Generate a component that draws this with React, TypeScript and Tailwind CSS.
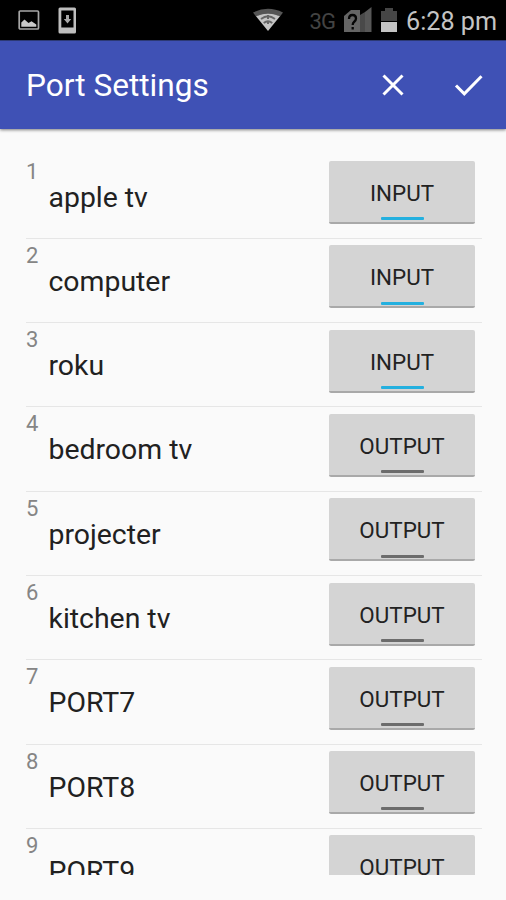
type Port = { id: number; name: string; mode: 'INPUT' | 'OUTPUT' };

const ports: Port[] = [
  { id: 1, name: 'apple tv', mode: 'INPUT' },
  { id: 2, name: 'computer', mode: 'INPUT' },
  { id: 3, name: 'roku', mode: 'INPUT' },
  { id: 4, name: 'bedroom tv', mode: 'OUTPUT' },
  { id: 5, name: 'projecter', mode: 'OUTPUT' },
  { id: 6, name: 'kitchen tv', mode: 'OUTPUT' },
  { id: 7, name: 'PORT7', mode: 'OUTPUT' },
  { id: 8, name: 'PORT8', mode: 'OUTPUT' },
  { id: 9, name: 'PORT9', mode: 'OUTPUT' },
];

function StatusBar() {
  return (
    <div className="flex h-[40px] shrink-0 items-center bg-black text-[#c4c4c4]">
      <svg className="ml-[18px]" width="22" height="22" viewBox="0 0 22 22">
        <rect x="1.2" y="2" width="19.3" height="18" rx="1" fill="none" stroke="#a6a6a6" strokeWidth="1.7" />
        <path d="M3.3 17.8v-4.2l3.2-3.1 4 3.5 3-1.8 4.8 3.4v2.2z" fill="#c9c9c9" />
      </svg>
      <svg className="ml-[18px]" width="19" height="28" viewBox="0 0 19 28">
        <path fillRule="evenodd" d="M2 1.500h14.5q1.5 0 1.5 1.5v23q0 1.500-1.500 1.500h-14.500q-1.500 0-1.500-1.500v-23q0-1.500 1.500-1.500zM3.300 4.500v17h12.200v-17z" fill="#bebebe" />
        <path d="M8 9h3v4h2.200l-3.700 4.500-3.700-4.500h2.200z" fill="#a8a8a8" />
      </svg>
      <svg className="ml-[175px]" width="32" height="24" viewBox="0 0 32 24">
        <path d="M1 4.500Q16-3 31 4.500L28 8.500Q16 2.500 4 8.500z" fill="#555" />
        <path d="M4 8.300Q16 2.800 28 8.300L16 23z" fill="#c4c4c4" />
        <path d="M9 11Q16 5.500 23 11M11.700 15Q16 11.500 20.300 15" fill="none" stroke="#666" strokeWidth="1.800" />
        <path d="M16 7v4M16 13v3" stroke="#666" strokeWidth="2" />
      </svg>
      <span className="ml-[25.5px] w-[27.5px] pt-[3px] text-[22px] leading-[26px] tracking-[-0.8px] text-[#434343]">3G</span>
      <svg className="ml-[7px]" width="28" height="28" viewBox="0 0 28 28">
        <path d="M0 10L7 4h9v22H0z" fill="#656565" />
        <path d="M16 9l5-3v20h-5z" fill="#494949" />
        <path d="M21 6l6.500-5v25H21z" fill="#575757" />
        <path d="M5 13q0-4 3.500-4t3.500 3.500q0 2-2 3.500-1.300 1-1.300 3M8.700 21v2.500" fill="none" stroke="#050505" strokeWidth="2.300" />
      </svg>
      <svg className="ml-[8px]" width="18" height="26" viewBox="0 0 18 26">
        <path d="M1 4h4V1h8v3h4v10H1z" fill="#464646" />
        <path d="M1 15h16v10H1z" fill="#c4c4c4" />
      </svg>
      <span className="ml-[8px] whitespace-nowrap pt-[4px] text-[25.2px] leading-[30px]">6:28 pm</span>
    </div>
  );
}

function Toolbar() {
  return (
    <header className="z-10 flex h-[89px] shrink-0 items-center border-t border-[#2c3974] bg-[#3f51b5] pl-[26px] shadow-[0_1px_3px_rgba(0,0,0,0.5)]">
      <h1 className="flex-1 whitespace-nowrap pt-[2px] text-[31.6px] leading-[36px] font-normal text-white">Port Settings</h1>
      <button aria-label="Cancel" className="mr-[36px]">
        <svg width="50" height="36" viewBox="0 0 50 36" fill="none" stroke="#fff" strokeWidth="3">
          <path d="M15.500 8.500l19 19M34.500 8.500l-19 19" />
        </svg>
      </button>
      <button aria-label="Apply" className="mr-[23px]">
        <svg width="29" height="36" viewBox="0 0 29 36" fill="none" stroke="#fff" strokeWidth="3">
          <path d="M2 18.500l8.300 8.300L27.500 9.200" />
        </svg>
      </button>
    </header>
  );
}

function PortRow({ port }: { port: Port }) {
  return (
    <li className="flex h-[84.29px] shrink-0 border-b border-[#e6e6e6]">
      <span className="w-[22.500px] pt-[4px] text-[22px] leading-[26px] text-[#858585]">{port.id}</span>
      <span className="flex-1 whitespace-nowrap pt-[26px] text-[28.400px] leading-[34px] text-[#212121]">{port.name}</span>
      <button className="mt-[6.500px] mr-[7px] flex h-[63px] w-[146px] flex-col items-center rounded-[2px] border-b-2 border-[#a9a9a9] bg-[#d4d4d4] pt-[17px] text-[22.400px] leading-[30px] text-[#222]">
        {port.mode}
        <span className={`mt-[9.3px] h-[3px] w-[43px] rounded-[1px] ${port.mode === 'INPUT' ? 'bg-[#24b0df]' : 'bg-[#6c6c6c]'}`} />
      </button>
    </li>
  );
}

export default function App() {
  return (
    <div className="flex h-[900px] w-[506px] flex-col overflow-hidden bg-[#fafafa] font-[Roboto,sans-serif]">
      <StatusBar />
      <Toolbar />
      <ul className="mt-[25.6px] mr-[24px] ml-[26px] flex h-[720.4px] shrink-0 flex-col overflow-hidden">
        {ports.map((port) => (
          <PortRow key={port.id} port={port} />
        ))}
      </ul>
    </div>
  );
}
